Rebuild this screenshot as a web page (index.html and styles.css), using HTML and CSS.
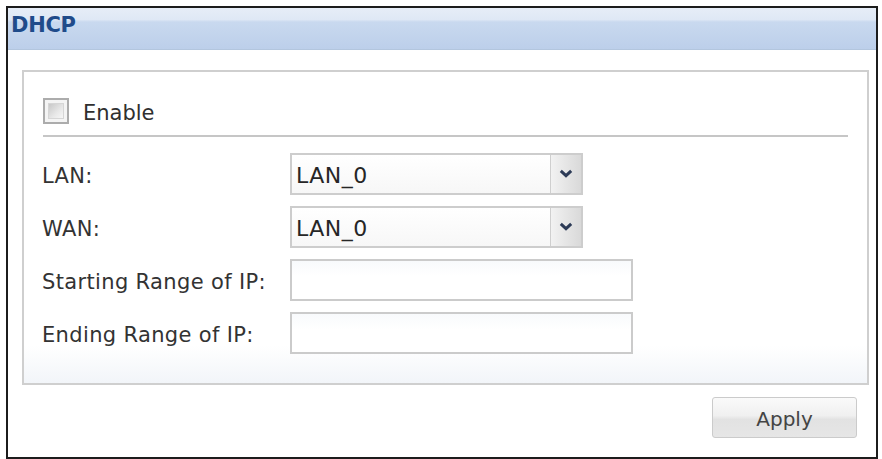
FILE: index.html
```html
<!DOCTYPE html>
<html>
<head>
<meta charset="utf-8">
<link rel="stylesheet" href="styles.css">
</head>
<body>
<div class="frame">
  <div class="header"><span class="title">DHCP</span></div>
  <div class="panel">
    <div class="enable-row">
      <span class="checkbox"><span class="checkbox-inner"></span></span>
      <span class="enable-label">Enable</span>
    </div>
    <div class="separator"></div>
    <div class="form">
      <div class="row">
        <span class="label">LAN:</span>
        <div class="select">
          <span class="select-value">LAN_0</span>
          <span class="select-btn">
            <svg width="14" height="9" viewBox="0 0 14 9"><path d="M1.8 1.8 L7 6.6 L12.2 1.8" fill="none" stroke="#2c3a56" stroke-width="3"/></svg>
          </span>
        </div>
      </div>
      <div class="row">
        <span class="label">WAN:</span>
        <div class="select">
          <span class="select-value">LAN_0</span>
          <span class="select-btn">
            <svg width="14" height="9" viewBox="0 0 14 9"><path d="M1.8 1.8 L7 6.6 L12.2 1.8" fill="none" stroke="#2c3a56" stroke-width="3"/></svg>
          </span>
        </div>
      </div>
      <div class="row">
        <span class="label">Starting Range of IP:</span>
        <div class="input"></div>
      </div>
      <div class="row">
        <span class="label">Ending Range of IP:</span>
        <div class="input"></div>
      </div>
    </div>
  </div>
  <div class="actions">
    <button class="apply">Apply</button>
  </div>
</div>
</body>
</html>
```

FILE: styles.css
```css
html, body {
  margin: 0;
  padding: 0;
  background: #ffffff;
}
body {
  font-family: "DejaVu Sans", Verdana, sans-serif;
  color: #3a3a3a;
}
.frame {
  margin: 6px 0 0 6px;
  width: 868px;
  height: 449px;
  border: 2px solid #1c1c1c;
  background: #ffffff;
  box-sizing: content-box;
  display: flex;
  flex-direction: column;
}
.header {
  height: 42px;
  border-bottom: 1px solid #b3c6de;
  background: linear-gradient(#e6edf7 0, #dfe8f5 28%, #c9d9ef 34%, #bccfea 100%);
  padding: 5px 0 0 3px;
  box-sizing: border-box;
}
.title {
  font-weight: bold;
  font-size: 21px;
  line-height: 24px;
  color: #1f4b8a;
  letter-spacing: -0.3px;
}
.panel {
  margin: 20px 7px 0 14px;
  border: 2px solid #cfcfcf;
  padding: 26px 19px 29px 18px;
  background: linear-gradient(#ffffff 0, #ffffff 88%, #f2f5f9 100%);
}
.enable-row {
  display: flex;
  align-items: center;
  height: 26px;
  padding-left: 1px;
}
.checkbox {
  width: 26px;
  height: 26px;
  box-sizing: border-box;
  border: 2px solid #acacac;
  padding: 3px;
  background: #f4f4f4;
  display: flex;
}
.checkbox-inner {
  flex: 1;
  border: 1px solid #d6d6d6;
  background: linear-gradient(135deg, #c8c8c8 0, #e8e8e8 60%, #f6f6f6 100%);
}
.enable-label {
  margin-left: 14px;
  padding-top: 4px;
  font-size: 21px;
  color: #2f2f2f;
}
.separator {
  margin: 11px 0 0 1px;
  height: 2px;
  background: #c6c6c6;
}
.form {
  margin-top: 16px;
  display: flex;
  flex-direction: column;
  gap: 11px;
}
.row {
  display: flex;
  align-items: center;
  height: 42px;
}
.label {
  width: 248px;
  padding-top: 3px;
  font-size: 21px;
  color: #333333;
  letter-spacing: 0.35px;
}
.select {
  width: 293px;
  height: 42px;
  box-sizing: border-box;
  border: 2px solid #cdcdcd;
  background: linear-gradient(#ffffff, #f7f7f7);
  display: flex;
  align-items: stretch;
}
.select-value {
  flex: 1;
  display: flex;
  align-items: center;
  padding: 3px 0 0 4px;
  font-size: 22px;
  color: #262626;
  letter-spacing: 0.5px;
}
.select-btn {
  width: 30px;
  border-left: 1px solid #cfcfcf;
  background: linear-gradient(90deg, #f2f2f2, #d9d9d9);
  display: flex;
  align-items: center;
  justify-content: center;
  padding-bottom: 2px;
}
.input {
  width: 343px;
  height: 42px;
  box-sizing: border-box;
  border: 2px solid #cbcbcb;
  background: linear-gradient(#f8fafc, #ffffff 40%);
}
.actions {
  display: flex;
  justify-content: flex-end;
  padding: 12px 19px 0 0;
}
.apply {
  width: 145px;
  height: 41px;
  border: 1px solid #cbcbcb;
  border-radius: 3px;
  background: linear-gradient(#fafafa 0, #f0f0f0 45%, #e2e2e2 55%, #e6e6e6 100%);
  font-family: "DejaVu Sans", Verdana, sans-serif;
  font-size: 20px;
  color: #444444;
  padding: 3px 0 0 0;
}
```
